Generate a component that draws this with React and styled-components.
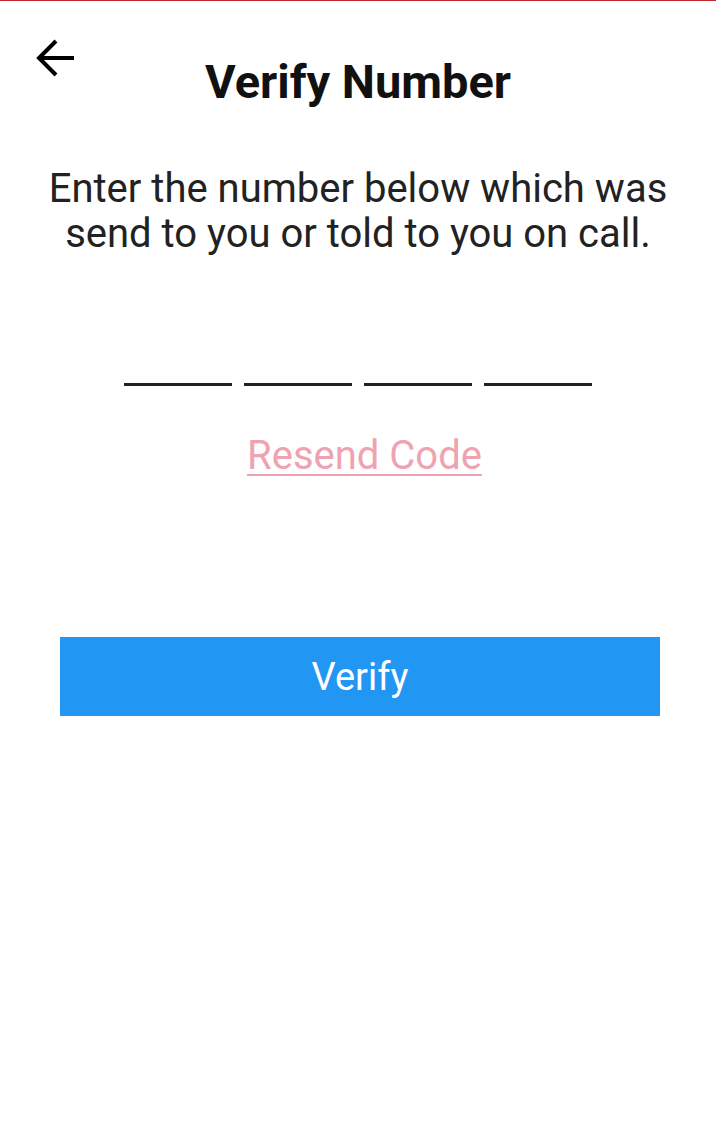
import React from 'react';
import styled, { createGlobalStyle } from 'styled-components';

const GlobalStyle = createGlobalStyle`
  html, body {
    margin: 0;
    padding: 0;
    background: #fff;
  }
  body {
    font-family: Roboto, "Noto Sans", sans-serif;
    color: #212121;
  }
`;

const Screen = styled.div`
  min-height: 1135px;
  border-top: 1px solid #c0282d;
  box-sizing: border-box;
  display: flex;
  flex-direction: column;
`;

const Header = styled.header`
  display: grid;
  grid-template-columns: 100px 1fr 100px;
  align-items: start;
  padding-top: 36px;
`;

const BackButton = styled.button`
  border: 0;
  background: none;
  padding: 0 0 0 36px;
  width: 82px;
  height: 42px;
  cursor: pointer;
  display: flex;
  align-items: center;
`;

const Title = styled.h1`
  margin: 18px 0 0;
  text-align: center;
  font-size: 47px;
  font-weight: 700;
  line-height: 54px;
  color: #111;
`;

const Message = styled.p`
  margin: 57px 20px 0;
  text-align: center;
  font-size: 40px;
  line-height: 45px;
  color: #222;
`;

const CodeRow = styled.div`
  display: flex;
  justify-content: center;
  gap: 12px;
  margin-top: 127px;
`;

const CodeSlot = styled.div`
  width: 108px;
  height: 3px;
  background: #222;
`;

const ResendLink = styled.a`
  align-self: center;
  margin: 48px 0 0 13px;
  font-size: 40px;
  line-height: 44px;
  color: #efa3b1;
  text-decoration: underline;
  text-decoration-thickness: 2px;
  text-underline-offset: 5px;
  cursor: pointer;
`;

const VerifyButton = styled.button`
  margin: 159px 56px 0 60px;
  height: 79px;
  border: 0;
  background: #2196f3;
  color: #fff;
  font-family: Roboto, sans-serif;
  font-size: 38px;
  cursor: pointer;
`;

function ArrowBack() {
  return (
    <svg width="40" height="40" viewBox="0 0 40 40" fill="none" stroke="#000" strokeWidth="4">
      <path d="M38 20H4" />
      <path d="M20 3L3 20l17 17" />
    </svg>
  );
}

export default function App() {
  const slots = [0, 1, 2, 3];
  return (
    <>
      <GlobalStyle />
      <Screen>
        <Header>
          <BackButton aria-label="Back">
            <ArrowBack />
          </BackButton>
          <Title>Verify Number</Title>
          <div />
        </Header>
        <Message>
          Enter the number below which was send to you or told to you on call.
        </Message>
        <CodeRow>
          {slots.map((s) => (
            <CodeSlot key={s} />
          ))}
        </CodeRow>
        <ResendLink>Resend Code</ResendLink>
        <VerifyButton>Verify</VerifyButton>
      </Screen>
    </>
  );
}
